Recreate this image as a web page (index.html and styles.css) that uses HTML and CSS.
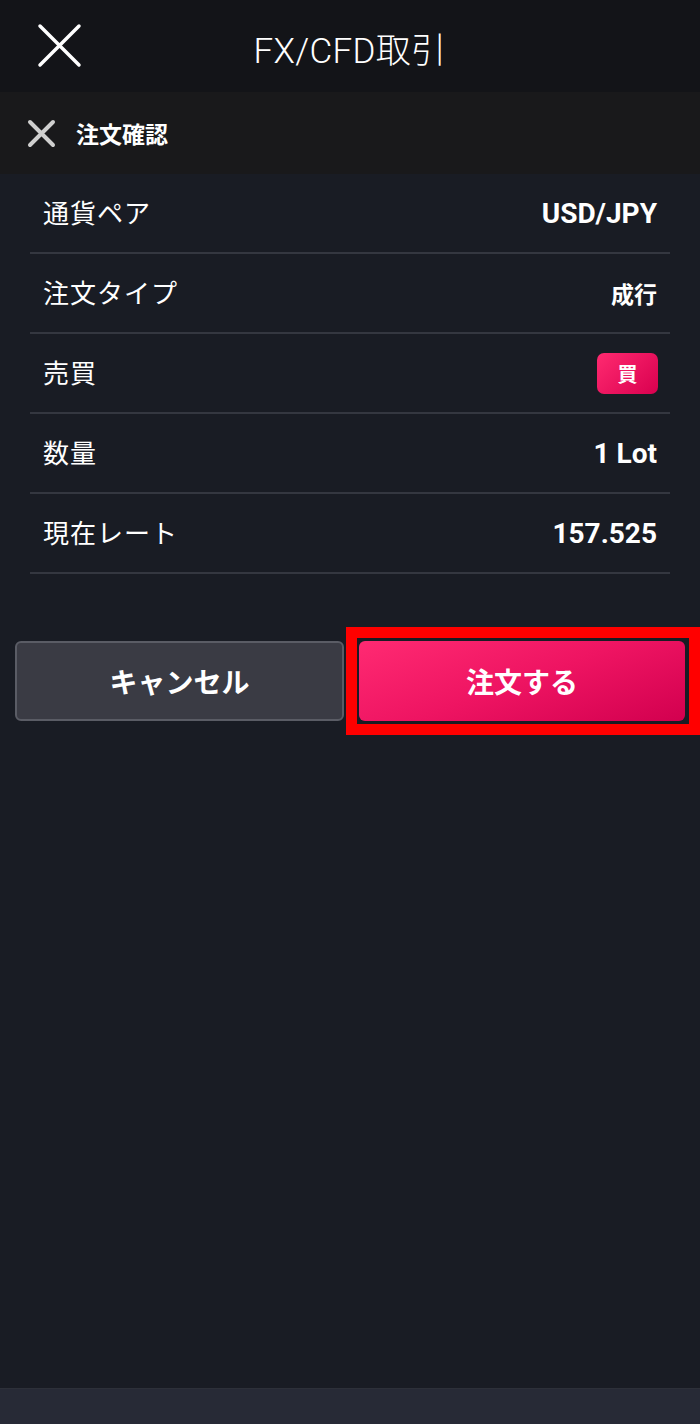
FILE: index.html
```html
<!DOCTYPE html>
<html lang="ja">
<head>
<meta charset="utf-8">
<title>FX/CFD取引</title>
<link rel="stylesheet" href="styles.css">
</head>
<body>
<div class="app">
  <header class="topbar">
    <svg class="close-lg" width="45" height="45" viewBox="0 0 45 45" aria-hidden="true">
      <path d="M3 3 L42 42 M42 3 L3 42" stroke="#ffffff" stroke-width="3.5" stroke-linecap="round" fill="none"/>
    </svg>
    <h1 class="title">FX/CFD取引</h1>
  </header>

  <div class="subbar">
    <svg class="close-sm" width="29" height="29" viewBox="0 0 29 29" aria-hidden="true">
      <path d="M3 3 L26 26 M26 3 L3 26" stroke="#cfcfcf" stroke-width="4" stroke-linecap="round" fill="none"/>
    </svg>
    <span class="subtitle">注文確認</span>
  </div>

  <div class="list">
    <div class="row">
      <span class="label">通貨ペア</span>
      <span class="value latin">USD/JPY</span>
    </div>
    <div class="row">
      <span class="label">注文タイプ</span>
      <span class="value">成行</span>
    </div>
    <div class="row">
      <span class="label">売買</span>
      <span class="badge">買</span>
    </div>
    <div class="row">
      <span class="label">数量</span>
      <span class="value latin">1 Lot</span>
    </div>
    <div class="row">
      <span class="label">現在レート</span>
      <span class="value latin">157.525</span>
    </div>
  </div>

  <div class="actions">
    <button class="btn btn-cancel">キャンセル</button>
    <div class="order-wrap">
      <button class="btn btn-order">注文する</button>
      <div class="highlight"></div>
    </div>
  </div>

  <div class="spacer"></div>
  <div class="bottombar"></div>
</div>
</body>
</html>
```

FILE: styles.css
```css
* {
  box-sizing: border-box;
}

html, body {
  margin: 0;
  padding: 0;
  background: #191c24;
}

body {
  font-family: "Noto Sans CJK JP", "Noto Sans", sans-serif;
  color: #ffffff;
}

.app {
  width: 700px;
  height: 1424px;
  display: flex;
  flex-direction: column;
  background: #191c24;
}

.topbar {
  height: 92px;
  background: #131418;
  position: relative;
  display: flex;
  align-items: center;
  justify-content: center;
}

.close-lg {
  position: absolute;
  left: 37px;
  top: 23px;
}

.title {
  margin: 0;
  font-family: Roboto, "Noto Sans CJK JP", sans-serif;
  font-weight: 300;
  font-size: 35px;
  letter-spacing: 0.3px;
  color: #ffffff;
  padding-top: 2px;
}

.subbar {
  height: 82px;
  background: #19191b;
  display: flex;
  align-items: center;
  padding-left: 27px;
  gap: 20px;
}

.subtitle {
  font-size: 23px;
  font-weight: 700;
  color: #ffffff;
}

.list {
  padding: 0 30px;
}

.row {
  height: 80px;
  border-bottom: 2px solid #343740;
  display: flex;
  align-items: center;
  justify-content: space-between;
  padding: 0 13px 0 13px;
}

.label {
  font-size: 26px;
  font-weight: 400;
  color: #ffffff;
  letter-spacing: 1px;
  padding-bottom: 3px;
}

.value {
  font-size: 23px;
  font-weight: 700;
  color: #ffffff;
}

.value.latin {
  font-family: Roboto, "Noto Sans CJK JP", sans-serif;
  font-size: 28px;
  font-weight: 700;
}

.badge {
  width: 61px;
  height: 41px;
  border-radius: 7px;
  background: linear-gradient(135deg, #ff2a70 0%, #d9004f 100%);
  display: flex;
  align-items: center;
  justify-content: center;
  font-size: 20px;
  font-weight: 700;
  color: #ffffff;
  margin-right: -1px;
}

.actions {
  margin-top: 67px;
  padding: 0 15px;
  display: grid;
  grid-template-columns: 329px 326px;
  column-gap: 15px;
}

.btn {
  height: 80px;
  border-radius: 6px;
  font-family: "Noto Sans CJK JP", sans-serif;
  font-size: 28px;
  font-weight: 700;
  color: #ffffff;
  cursor: pointer;
  padding: 0;
  min-width: 0;
}

.btn-cancel {
  background: #3a3b44;
  border: 2px solid #5a5c65;
}

.order-wrap {
  position: relative;
  display: flex;
  min-width: 0;
}

.btn-order {
  flex: 1;
  border: none;
  background: linear-gradient(160deg, #ff2a72 0%, #ee1462 50%, #d2004f 100%);
}

.highlight {
  position: absolute;
  top: -14px;
  bottom: -14px;
  left: -13px;
  right: -15px;
  border: 11px solid #ff0000;
  pointer-events: none;
}

.spacer {
  flex: 1;
}

.bottombar {
  height: 36px;
  background: #272a36;
  border-top: 1px solid #2d3039;
}
```
